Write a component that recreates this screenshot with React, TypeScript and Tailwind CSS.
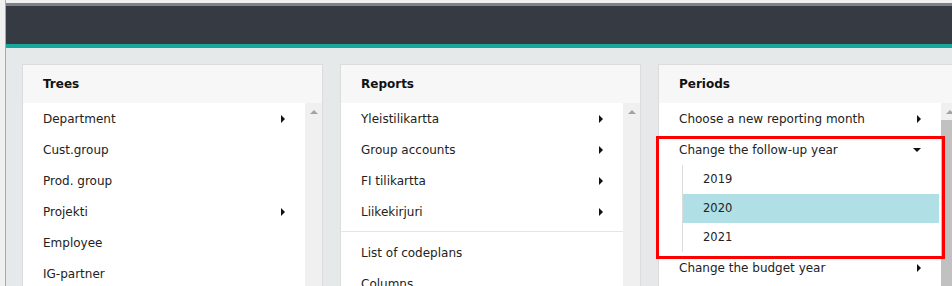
const trees = [
  { label: 'Department', sub: true },
  { label: 'Cust.group' },
  { label: 'Prod. group' },
  { label: 'Projekti', sub: true },
  { label: 'Employee' },
  { label: 'IG-partner' },
]

const reports = [
  { label: 'Yleistilikartta', sub: true },
  { label: 'Group accounts', sub: true },
  { label: 'FI tilikartta', sub: true },
  { label: 'Liikekirjuri', sub: true },
]

const years = ['2019', '2020', '2021']

function RightCaret() {
  return (
    <span className="h-0 w-0 border-y-[4px] border-l-[4px] border-y-transparent border-l-[#111]" />
  )
}

function DownCaret() {
  return (
    <span className="h-0 w-0 border-x-[4px] border-t-[4px] border-x-transparent border-t-[#111]" />
  )
}

function Row({ label, sub }: { label: string; sub?: boolean }) {
  return (
    <div className="flex h-[31px] shrink-0 items-center justify-between pl-[20px] pr-[20px]">
      <span>{label}</span>
      {sub && <RightCaret />}
    </div>
  )
}

function Scrollbar({ thumb }: { thumb?: boolean }) {
  return (
    <div className="flex w-[17px] shrink-0 flex-col items-center bg-[#f0f0f0]">
      <span className="mt-[7px] h-0 w-0 border-x-[4px] border-b-[4px] border-x-transparent border-b-[#a3a3a3]" />
      {thumb && <div className="mt-[6px] w-full flex-1 bg-[#c1c1c1]" />}
    </div>
  )
}

function Panel({
  title,
  children,
  thumb,
  overlay,
}: {
  title: string
  children: React.ReactNode
  thumb?: boolean
  overlay?: React.ReactNode
}) {
  return (
    <div className="relative flex h-[260px] w-[301px] shrink-0 flex-col border border-b-0 border-[#dcdcdc] bg-white">
      <div className="flex h-[38px] shrink-0 items-center bg-[#f7f7f7] pl-[20px] font-bold text-[#111]">
        {title}
      </div>
      <div className="flex flex-1 overflow-hidden">
        <div className="flex-1">{children}</div>
        <Scrollbar thumb={thumb} />
      </div>
      {overlay}
    </div>
  )
}

export default function App() {
  return (
    <div
      className="flex h-[286px] w-[952px] overflow-hidden bg-[#f0f0f0] text-[12px] text-[#222]"
      style={{ fontFamily: '"DejaVu Sans", Verdana, sans-serif' }}
    >
      <div className="w-[6px] shrink-0 border-r border-[#a9a9a9]" />
      <div className="flex min-w-0 flex-1 flex-col">
        <div className="h-[3px] shrink-0 bg-[#f0f0f0]" />
        <div className="h-[3px] shrink-0 bg-[#7b828a]" />
        <div className="h-[38px] shrink-0 bg-[#363a42]" />
        <div className="h-[4px] shrink-0 bg-[#16a99b]" />
        <main className="flex min-h-0 flex-1 gap-[17px] overflow-hidden bg-[#e5e9e9] pl-[16px] pt-[16px]">
          <Panel title="Trees">
            {trees.map((item) => (
              <Row key={item.label} label={item.label} sub={item.sub} />
            ))}
          </Panel>

          <Panel title="Reports">
            {reports.map((item) => (
              <Row key={item.label} label={item.label} sub={item.sub} />
            ))}
            <div className="mb-[5px] mt-[4px] border-t border-[#e6e6e6]" />
            <Row label="List of codeplans" />
            <Row label="Columns" />
          </Panel>

          <Panel
            title="Periods"
            thumb
            overlay={
              <div className="absolute left-[-3px] top-[71px] h-[123px] w-[289px] border-[3px] border-[#ff0000]" />
            }
          >
            <Row label="Choose a new reporting month" sub />
            <div className="flex h-[31px] items-center justify-between pl-[20px] pr-[20px]">
              <span>Change the follow-up year</span>
              <DownCaret />
            </div>
            <div className="ml-[23px] mr-[2px] border-l border-[#dcdcdc]">
              {years.map((year) => (
                <div
                  key={year}
                  className={`flex h-[29px] items-center pl-[20px] text-[11.5px] ${
                    year === '2020' ? 'bg-[#b0dfe5]' : ''
                  }`}
                >
                  {year}
                </div>
              ))}
            </div>
            <Row label="Change the budget year" sub />
          </Panel>
        </main>
      </div>
    </div>
  )
}
